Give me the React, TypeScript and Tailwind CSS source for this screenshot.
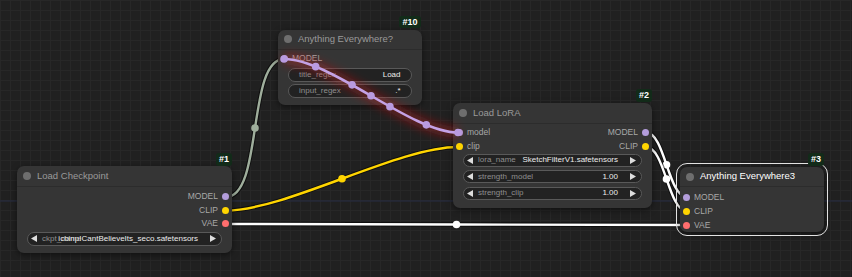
import React from "react";

type P = [number, number];

const MODEL = "#b39ddb";
const CLIP = "#ffd500";
const VAE = "#ff6e6e";

// litegraph style spline: handles pushed horizontally by a quarter of the distance
const ctrl = (a: P, b: P): [P, P, P, P] => {
	const d = Math.hypot(b[0] - a[0], b[1] - a[1]) * 0.25;
	return [a, [a[0] + d, a[1]], [b[0] - d, b[1]], b];
};
const pathOf = (c: [P, P, P, P]) =>
	`M${c[0][0]},${c[0][1]} C${c[1][0]},${c[1][1]} ${c[2][0]},${c[2][1]} ${c[3][0]},${c[3][1]}`;
const at = (c: [P, P, P, P], t: number): P => {
	const u = 1 - t;
	const k = [u * u * u, 3 * u * u * t, 3 * u * t * t, t * t * t];
	return [
		k.reduce((s, v, i) => s + v * c[i][0], 0),
		k.reduce((s, v, i) => s + v * c[i][1], 0),
	];
};

const links: { a: P; b: P; color: string }[] = [
	{ a: [226, 197], b: [284, 59], color: "#9fae9c" },
	{ a: [226, 210.5], b: [458, 147], color: CLIP },
	{ a: [226, 224], b: [687, 225], color: "#ffffff" },
	{ a: [646, 132.5], b: [687, 197], color: "#ffffff" },
	{ a: [646, 147], b: [687, 211], color: "#ffffff" },
];

const hot = ctrl([284, 59], [458, 132.5]);

const Tri = ({ dir }: { dir: "l" | "r" }) => (
	<svg width="6" height="7" viewBox="0 0 6 7" className="shrink-0">
		<polygon points={dir === "l" ? "6,0 6,7 0,3.5" : "0,0 0,7 6,3.5"} fill="#dddddd" />
	</svg>
);

const Dot = ({ c }: { c: string }) => (
	<span className="w-[7px] h-[7px] rounded-full shrink-0" style={{ background: c }} />
);

const Combo = ({ label, value, h = "h-[13px]" }: { label: string; value: string; h?: string }) => (
	<div className={`${h} mx-[10px] rounded-full border border-[#595959] bg-[#222222] flex items-center pl-[3px] pr-[5px] text-[8px] leading-none`}>
		<Tri dir="l" />
		<span className="ml-[5px] w-0 whitespace-nowrap text-[#8f8f8f]">{label}</span>
		<span className="ml-auto whitespace-nowrap text-[#ececec]">{value}</span>
		<span className="ml-[12px]">
			<Tri dir="r" />
		</span>
	</div>
);

const TextW = ({ label, value }: { label: string; value: string }) => (
	<div className="h-[14px] mx-[10px] rounded-full border border-[#595959] bg-[#222222] flex items-center px-[10px] text-[8px] leading-none">
		<span className="text-[#8f8f8f]">{label}</span>
		<span className="ml-auto text-[#ececec]">{value}</span>
	</div>
);

const Title = ({ text, h, white }: { text: string; h: string; white?: boolean }) => (
	<div className={`${h} flex items-center border-b border-[#2c2c2c] shrink-0`}>
		<span className="ml-[6px] w-[8px] h-[8px] rounded-full bg-[#6e6e6e]" />
		<span className={`ml-[6px] text-[9.5px] ${white ? "text-white" : "text-[#9a9a9a]"}`}>{text}</span>
	</div>
);

const Badge = ({ n, pos }: { n: string; pos: string }) => (
	<div className={`absolute ${pos} h-[12.5px] px-[3px] rounded-[3px] bg-[#122b19] text-white font-bold text-[9px] leading-[12.5px]`}>
		{n}
	</div>
);

const OutRow = ({ label, c, h }: { label: string; c: string; h: string }) => (
	<div className={`${h} flex items-center justify-end pr-[3px] gap-[4px] text-[8.5px] text-[#a8a8a8]`}>
		<span>{label}</span>
		<Dot c={c} />
	</div>
);

const InRow = ({ label, c, h }: { label: string; c: string; h: string }) => (
	<div className={`${h} flex items-center pl-[3px] gap-[4px] text-[8.5px] text-[#a8a8a8]`}>
		<Dot c={c} />
		<span>{label}</span>
	</div>
);

export default function App() {
	return (
		<div className="relative w-[852px] h-[277px] overflow-hidden bg-[#202020] [background-image:linear-gradient(to_right,#272727_1px,transparent_1px),linear-gradient(to_bottom,#272727_1px,transparent_1px)] [background-size:10px_10px] font-['Liberation_Sans',Arial,sans-serif]">
			{/* canvas axis + links under the nodes */}
			<svg className="absolute inset-0" width="852" height="277">
				<line x1="0" y1="201" x2="852" y2="201" stroke="#262d45" strokeWidth="1" />
				{links.map((l, i) => {
					const c = ctrl(l.a, l.b);
					const m = at(c, 0.5);
					return (
						<g key={i}>
							<path d={pathOf(c)} fill="none" stroke="rgba(0,0,0,0.55)" strokeWidth="4.5" />
							<path d={pathOf(c)} fill="none" stroke={l.color} strokeWidth="2.4" />
							<circle cx={m[0]} cy={m[1]} r="3.8" fill={l.color} />
						</g>
					);
				})}
			</svg>

			{/* #10 Anything Everywhere? */}
			<div className="absolute left-[278px] top-[29.5px] w-[143.5px] h-[75.5px] rounded-[7px] bg-[#353535] shadow-[0_2px_6px_rgba(0,0,0,0.5)] flex flex-col">
				<Badge n="#10" pos="-top-[14px] right-[1px]" />
				<Title text="Anything Everywhere?" h="h-[20px]" />
				<div className="pt-[2.5px]">
					<InRow label="MODEL" c={MODEL} h="h-[13px]" />
				</div>
				<div className="mt-[2.5px] flex flex-col gap-[2px]">
					<TextW label="title_regex" value="Load" />
					<TextW label="input_regex" value=".*" />
				</div>
			</div>

			{/* #2 Load LoRA */}
			<div className="absolute left-[453px] top-[103px] w-[199px] h-[105px] rounded-[7px] bg-[#353535] shadow-[0_2px_6px_rgba(0,0,0,0.5)] flex flex-col">
				<Badge n="#2" pos="-top-[14px] right-0" />
				<Title text="Load LoRA" h="h-[21px]" />
				<div className="pt-[1.5px]">
					{[
						["model", "MODEL", MODEL],
						["clip", "CLIP", CLIP],
					].map(([a, b, c]) => (
						<div key={a} className="h-[14px] flex items-center px-[3px] gap-[4px] text-[8.5px] text-[#a8a8a8]">
							<Dot c={c} />
							<span>{a}</span>
							<span className="ml-auto">{b}</span>
							<Dot c={c} />
						</div>
					))}
				</div>
				<div className="flex flex-col gap-[3.5px]">
					<Combo label="lora_name" value="SketchFilterV1.safetensors" />
					<Combo label="strength_model" value="1.00" />
					<Combo label="strength_clip" value="1.00" />
				</div>
			</div>

			{/* #1 Load Checkpoint */}
			<div className="absolute left-[17px] top-[166px] w-[215px] h-[87px] rounded-[7px] bg-[#353535] shadow-[0_2px_6px_rgba(0,0,0,0.5)] flex flex-col">
				<Badge n="#1" pos="-top-[13px] right-0" />
				<Title text="Load Checkpoint" h="h-[21px]" />
				<div className="pt-[3px]">
					<OutRow label="MODEL" c={MODEL} h="h-[13.5px]" />
					<OutRow label="CLIP" c={CLIP} h="h-[13.5px]" />
					<OutRow label="VAE" c={VAE} h="h-[13.5px]" />
				</div>
				<div className="mt-[1px]">
					<Combo label="ckpt_name" value="icbinpICantBelieveIts_seco.safetensors" h="h-[14px]" />
				</div>
			</div>

			{/* #3 Anything Everywhere3 (selected) */}
			<div className="absolute left-[680px] top-[167px] w-[144px] h-[65px] rounded-[7px] bg-[#353535] shadow-[0_2px_6px_rgba(0,0,0,0.5)] outline-[1.5px] outline-offset-[3px] outline-[#e2e2e2] flex flex-col">
				<Badge n="#3" pos="-top-[14px] right-0" />
				<Title text="Anything Everywhere3" h="h-[20px]" white />
				<div className="pt-[3px]">
					<InRow label="MODEL" c={MODEL} h="h-[14px]" />
					<InRow label="CLIP" c={CLIP} h="h-[14px]" />
					<InRow label="VAE" c={VAE} h="h-[14px]" />
				</div>
			</div>

			{/* highlighted link, drawn above the nodes */}
			<svg className="absolute inset-0 pointer-events-none" width="852" height="277">
				<defs>
					<filter id="glow" x="-20%" y="-40%" width="140%" height="180%">
						<feGaussianBlur stdDeviation="5" />
					</filter>
				</defs>
				<path d={pathOf(hot)} fill="none" stroke="rgba(210,20,30,0.4)" strokeWidth="11" filter="url(#glow)" />
				<path d={pathOf(hot)} fill="none" stroke="#c4a2e6" strokeWidth="2.6" />
				{[0, 0.2, 0.4, 0.5, 0.6, 0.8, 1].map((t) => {
					const p = at(hot, t);
					return <circle key={t} cx={p[0]} cy={p[1]} r="3.8" fill="#b99be0" />;
				})}
			</svg>
		</div>
	);
}
